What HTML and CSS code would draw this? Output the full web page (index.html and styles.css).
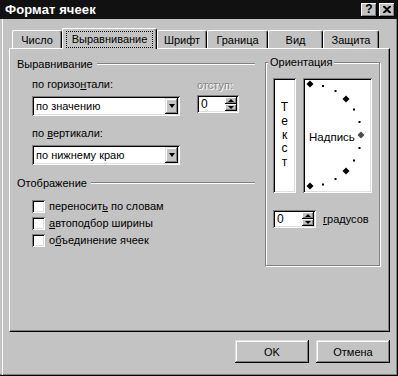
FILE: index.html
```html
<!DOCTYPE html>
<html lang="ru">
<head>
<meta charset="utf-8">
<title>Формат ячеек</title>
<link rel="stylesheet" href="styles.css">
</head>
<body>
<div class="window">
  <div class="titlebar">
    <span class="title">Формат ячеек</span>
    <div class="tb-buttons">
      <span class="tb-btn">?</span>
      <span class="tb-btn"><svg width="8" height="7" viewBox="0 0 8 7"><path d="M0 0h2l2 2 2-2h2v1L5.2 3.5 8 6v1H6L4 5 2 7H0V6l2.8-2.5L0 1z" fill="#000"/></svg></span>
    </div>
  </div>
  <div class="body">
    <div class="tabs">
      <div class="tab t1">Число</div>
      <div class="tab t2 sel"><span class="focus">Выравнивание</span></div>
      <div class="tab t3">Шрифт</div>
      <div class="tab t4">Граница</div>
      <div class="tab t5">Вид</div>
      <div class="tab t6">Защита</div>
    </div>
    <div class="panel">
      <div class="left">
        <div class="group-head"><span>Выравнивание</span><i class="rule"></i></div>
        <div class="fields">
          <div class="col-main">
            <div class="lbl first">по горизо<u>н</u>тали:</div>
            <div class="combo"><span class="combo-text">по значению</span><span class="combo-btn"><i class="tri-down"></i></span></div>
            <div class="lbl second">по <u>в</u>ертикали:</div>
            <div class="combo"><span class="combo-text">по нижнему краю</span><span class="combo-btn"><i class="tri-down"></i></span></div>
          </div>
          <div class="col-indent">
            <div class="lbl first disabled">отступ:</div>
            <div class="spin indent-spin"><span class="spin-text">0</span><span class="spin-btns"><span class="spin-btn"><i class="tri-up-s"></i></span><span class="spin-btn"><i class="tri-down-s"></i></span></span></div>
          </div>
        </div>
        <div class="group-head second-head"><span>Отображение</span><i class="rule"></i></div>
        <div class="checks">
          <div class="check"><span class="box"></span><span>переносит<u>ь</u> по словам</span></div>
          <div class="check"><span class="box"></span><span><u>а</u>втоподбор ширины</span></div>
          <div class="check"><span class="box"></span><span>о<u>б</u>ъединение ячеек</span></div>
        </div>
      </div>
      <div class="frame">
        <span class="legend">Ориентация</span>
        <div class="orient-row">
          <div class="vtext"><span>Т</span><span>е</span><span>к</span><span>с</span><span>т</span></div>
          <div class="preview">
            <svg class="dial" width="69" height="115" viewBox="0 0 69 115">
              <g fill="#000">
                <path d="M7 2.5l3.5 3.5-3.5 3.5-3.5-3.5z"/>
                <rect x="19" y="7" width="2" height="2"/>
                <rect x="31.5" y="12" width="2" height="2"/>
                <path d="M43 17.5l3.5 3.5-3.5 3.5-3.5-3.5z"/>
                <rect x="50" y="30.5" width="2" height="2"/>
                <rect x="55.5" y="43" width="2" height="2"/>
                <rect x="55.5" y="69" width="2" height="2"/>
                <rect x="50" y="81.5" width="2" height="2"/>
                <path d="M43 89.5l3.5 3.5-3.5 3.5-3.5-3.5z"/>
                <rect x="31.5" y="100" width="2" height="2"/>
                <rect x="19" y="105.5" width="2" height="2"/>
                <path d="M7 104.5l3.5 3.5-3.5 3.5-3.5-3.5z"/>
              </g>
              <path d="M58 53.5l3.5 3.5-3.5 3.5-3.5-3.5z" fill="#4a4a4a"/>
            </svg>
            <span class="preview-text">Надпись</span>
          </div>
        </div>
        <div class="deg-row">
          <div class="spin deg-spin"><span class="spin-text">0</span><span class="spin-btns"><span class="spin-btn"><i class="tri-up-s"></i></span><span class="spin-btn"><i class="tri-down-s"></i></span></span></div>
          <span class="deg-label"><u>г</u>радусов</span>
        </div>
      </div>
    </div>
    <div class="actions">
      <div class="btn">OK</div>
      <div class="btn">Отмена</div>
    </div>
  </div>
</div>
</body>
</html>
```

FILE: styles.css
```css
* { box-sizing: border-box; margin: 0; padding: 0; }
html, body { width: 398px; height: 376px; overflow: hidden; background: #c3c3c3; }
body { font-family: "Liberation Sans", Arial, sans-serif; font-size: 11px; color: #000; }
u { text-decoration: underline; text-underline-offset: 1px; }

.window {
  width: 398px; height: 376px; background: #c3c3c3;
  border-right: 1px solid #000; border-bottom: 1px solid #000;
  box-shadow: inset -1px -1px #808080;
}

.titlebar {
  height: 19px; background: #111; display: flex; align-items: center;
  padding-left: 5px;
}
.title { color: #fff; font-weight: bold; font-size: 13px; letter-spacing: 0.1px; }
.tb-buttons { margin-left: auto; display: flex; gap: 2px; margin-right: 2px; }
.tb-btn {
  width: 16px; height: 14px; background: #c3c3c3;
  box-shadow: inset -1px -1px #000, inset 1px 1px #fff, inset -2px -2px #808080;
  display: flex; align-items: center; justify-content: center;
  font-weight: bold; font-size: 12px; line-height: 12px; padding-bottom: 1px;
}

.body { height: 356px; margin-left: 2px; border-left: 1px solid #fff; padding-left: 6px; }

.tabs { display: flex; align-items: flex-end; height: 29px; padding-left: 3px; }
.tab {
  height: 18px; background: #c3c3c3;
  border-top: 1px solid #fff; border-left: 1px solid #fff; border-right: 1px solid #000;
  box-shadow: inset -1px 0 #808080;
  border-radius: 2px 3px 0 0;
  text-align: center; padding-top: 3px; line-height: 13px;
}
.tab.sel {
  height: 21px; margin-bottom: -1px; position: relative; z-index: 1;
  padding-top: 2px; display: flex; justify-content: center;
}
.focus { display: block; border: 1px dotted #000; height: 17px; line-height: 14px; padding: 0 5px; }
.t1 { width: 50px; }
.t2 { width: 95px; }
.t3 { width: 50px; }
.t4 { width: 61px; }
.t5 { width: 55px; }
.t6 { width: 56px; }

.panel {
  width: 381px; height: 284px; display: flex; gap: 10px; padding-left: 7px;
  border-top: 1px solid #fff; border-left: 1px solid #fff;
  border-right: 1px solid #000; border-bottom: 1px solid #000;
  box-shadow: inset -1px -1px #808080;
}

.left { width: 238px; }
.group-head { display: flex; align-items: center; height: 14px; line-height: 14px; margin-top: 8px; }
.second-head { margin-top: 11px; }
.rule { flex: 1; height: 2px; border-top: 1px solid #808080; border-bottom: 1px solid #fff; margin-left: 4px; }

.fields { display: flex; gap: 17px; margin-left: 15px; }
.col-main { width: 148px; }
.col-indent { width: 42px; }
.lbl { height: 13px; line-height: 13px; }
.lbl.first { margin-top: 7px; }
.lbl.second { margin-top: 11px; }
.col-indent .lbl.first { margin-top: 8px; }
.disabled { color: #868686; text-shadow: 1px 1px 0 #fff; }

.combo, .spin, .box, .vtext, .preview {
  background: #fff;
  box-shadow: inset 1px 1px #808080, inset -1px -1px #fff, inset 2px 2px #000, inset -2px -2px #dfdfdf;
}
.combo { margin-top: 5px; height: 20px; display: flex; padding: 2px; }
.combo-text { flex: 1; line-height: 16px; padding-left: 2px; }
.combo-btn, .spin-btn, .btn {
  background: #c3c3c3;
  box-shadow: inset -1px -1px #000, inset 1px 1px #dfdfdf, inset -2px -2px #808080, inset 2px 2px #fff;
}
.combo-btn { width: 13px; height: 16px; display: flex; align-items: center; justify-content: center; }
.tri-down { display: block; width: 0; height: 0; border-left: 3.5px solid transparent; border-right: 3.5px solid transparent; border-top: 4px solid #000; margin-left: 1px; }

.spin { display: flex; padding: 2px; height: 18px; }
.indent-spin { margin-top: 3px; width: 42px; }
.spin-text { flex: 1; line-height: 14px; padding-left: 2px; font-size: 12px; }
.spin-btns { display: flex; flex-direction: column; width: 12px; }
.spin-btn { flex: 1; display: flex; align-items: center; justify-content: center; box-shadow: inset -1px -1px #000, inset 1px 1px #fff, inset -2px -2px #808080; }
.tri-up-s { display: block; width: 0; height: 0; border-left: 3px solid transparent; border-right: 3px solid transparent; border-bottom: 3px solid #000; }
.tri-down-s { display: block; width: 0; height: 0; border-left: 3px solid transparent; border-right: 3px solid transparent; border-top: 3px solid #000; }

.checks { margin-top: 10px; margin-left: 15px; display: flex; flex-direction: column; gap: 4px; }
.check { display: flex; align-items: center; gap: 4px; height: 13px; line-height: 13px; }
.box { width: 13px; height: 13px; flex: none; }

.frame {
  margin-top: 13px; width: 115px; height: 204px; padding: 0 7px;
  border: 1px solid #808080;
  box-shadow: inset 1px 1px #fff, 1px 1px #fff;
}
.legend {
  display: block; width: fit-content; height: 14px; line-height: 14px;
  margin: -8px 0 0 -5px; padding: 0 2px; background: #c3c3c3;
}
.orient-row { display: flex; gap: 7px; height: 115px; margin-top: 9px; }
.vtext {
  width: 23px; display: flex; flex-direction: column; align-items: center; justify-content: center;
  line-height: 13.8px; font-size: 12px;
}
.preview { width: 69px; position: relative; display: flex; align-items: center; padding: 3px 0 0 6px; }
.dial { position: absolute; left: 0; top: 0; }
.preview-text { font-size: 11.5px; }

.deg-row { display: flex; align-items: center; gap: 7px; margin-top: 17px; }
.deg-spin { width: 43px; }

.actions { display: flex; justify-content: flex-end; gap: 7px; margin-top: 8px; width: 381px; }
.btn { width: 74px; height: 23px; display: flex; align-items: center; justify-content: center; }
```
